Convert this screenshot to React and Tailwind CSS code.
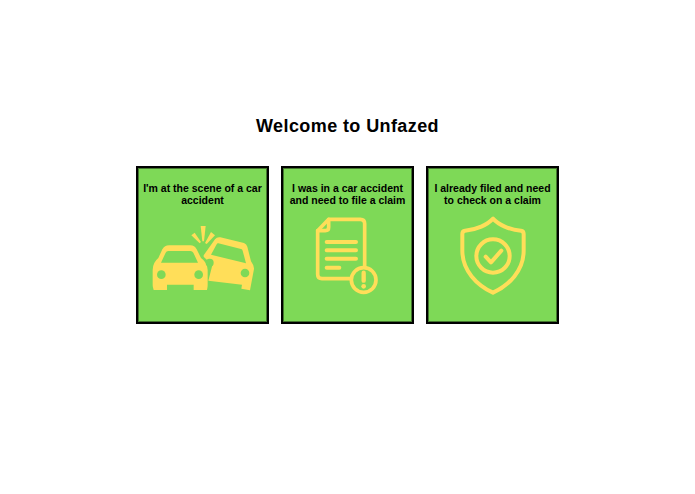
const YELLOW = "#ffde59";
const GREEN = "#7ed957";

function CarsIcon() {
  return (
    <svg width="108" height="84" viewBox="0 -24 324 252" className="block">
      <path fill={YELLOW} d="M40 82 Q47 70 60 70 H124 Q137 70 143 82 L156 108 Q176 122 176 144 V190 Q176 196 174 204 H134 V188 H54 V204 H14 Q11 196 11 190 V144 Q11 122 28 108 Z" />
      <path fill={GREEN} d="M58 87 H124 Q130 87 133 92 L147 122 H36 L50 92 Q52 87 58 87 Z" />
      <circle cx="37" cy="158" r="13" fill={GREEN} />
      <circle cx="149" cy="158" r="13" fill={GREEN} />
      <path fill={YELLOW} d="M164 100 L198 52 Q204 44 214 46 L285 63 Q293 66 295 74 L306 118 Q318 134 314 146 L303 205 L277 200 L279 188 L178 176 L190 130 L164 104 Z" />
      <path fill={GREEN} d="M208 64 L276 81 Q280 82 281 86 L291 124 L186 98 L203 67 Q205 63 208 64 Z" />
      <circle cx="182" cy="122" r="12" fill={GREEN} />
      <circle cx="288" cy="153" r="13" fill={GREEN} />
      <polygon fill={YELLOW} points="155,12 170,12 165,58 160,58" />
      <polygon fill={YELLOW} points="127,40 137,32 156,60 152,64" />
      <polygon fill={YELLOW} points="186,30 198,40 173,66 168,63" />
    </svg>
  );
}

function DocIcon() {
  return (
    <svg width="108" height="84" viewBox="-54 0 324 252" className="block" fill="none" stroke={YELLOW} strokeWidth="11" strokeLinecap="round" strokeLinejoin="round">
      <path d="M115 194 H30 Q17 194 17 181 V50 L50 16 H145 Q158 16 158 29 V160" />
      <path d="M50 16 V40 Q50 50 40 50 H17" />
      <path strokeWidth="12" d="M44 84 H132 M44 109 H132 M44 134 H132 M44 161 H82" />
      <circle cx="155" cy="198" r="37" fill={GREEN} />
      <path strokeWidth="13" d="M155 176 V200" />
      <circle cx="155" cy="217" r="7" fill={YELLOW} stroke="none" />
    </svg>
  );
}

function ShieldIcon() {
  return (
    <svg width="108" height="84" viewBox="-54 0 324 252" className="block" fill="none" stroke={YELLOW} strokeWidth="12" strokeLinecap="round" strokeLinejoin="round">
      <path d="M108 14 C92 32 58 48 24 50 Q16 51 16 60 V110 C16 170 60 214 108 236 C156 214 200 170 200 110 V60 Q200 51 192 50 C158 48 124 32 108 14 Z" />
      <circle cx="108" cy="126" r="50" />
      <path strokeWidth="12" d="M86 128 L102 145 L133 110" />
    </svg>
  );
}

function Card({ lines, children }) {
  return (
    <div className="w-[133px] h-[158px] flex flex-col items-center border-2 border-black shadow-[inset_0_0_0_1px_rgba(0,0,0,0.45)] bg-[#7ed957] pt-[14px] overflow-hidden">
      <p className="w-full text-center text-[10.5px] leading-[12px] font-bold text-black whitespace-nowrap">
        {lines.map((l) => (
          <span key={l} className="block">{l}</span>
        ))}
      </p>
      <div className="mt-[8px] -mx-2 shrink-0">{children}</div>
    </div>
  );
}

export default function App() {
  return (
    <div className="w-[695px] h-[494px] bg-white flex flex-col items-center pt-[115px] font-['Liberation_Sans',Arial,sans-serif]">
      <h1 className="text-[18px] leading-[22px] font-bold tracking-[0.4px] text-black">Welcome to Unfazed</h1>
      <div className="mt-[29px] flex gap-3">
        <Card lines={["I'm at the scene of a car", "accident"]}><CarsIcon /></Card>
        <Card lines={["I was in a car accident", "and need to file a claim"]}><DocIcon /></Card>
        <Card lines={["I already filed and need", "to check on a claim"]}><ShieldIcon /></Card>
      </div>
    </div>
  );
}
